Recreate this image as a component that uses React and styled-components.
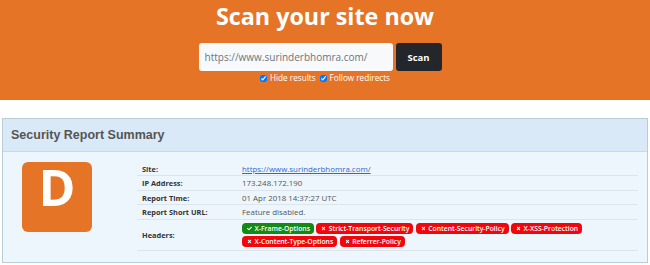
import styled, { createGlobalStyle } from "styled-components"
import { FaCheck, FaTimes } from "react-icons/fa"

const GlobalStyle = createGlobalStyle`
body {
  margin: 0;
  background: #fff;
  font-family: "Open Sans", "Liberation Sans", sans-serif;
}
`;

const Hero = styled.div`
background-color: #e67426;
height: 100px;
display: flex;
flex-direction: column;
align-items: center;
`;

const HeroTitle = styled.h1`
margin: 0;
font-size: 23.3px;
line-height: 32px;
font-weight: 700;
color: #fff;
`;

const Form = styled.div`
display: flex;
align-items: center;
gap: 3px;
margin: 11px 10px 0 0;
`;

const UrlInput = styled.input`
width: 194px;
height: 28px;
box-sizing: border-box;
border: none;
border-radius: 3px;
background: #f8f9fa;
padding: 0 6px;
font-family: "Open Sans", sans-serif;
font-size: 10px;
outline: none;
&::placeholder {
  color: #6c757d;
}
`;

const ScanButton = styled.button`
width: 46px;
height: 28px;
border: none;
border-radius: 3px;
background: #23272b;
color: #fff;
font-family: "Open Sans", sans-serif;
font-weight: 700;
font-size: 9.5px;
padding: 0;
`;

const Options = styled.div`
display: flex;
align-items: center;
margin: 1px 0 0 4px;
color: #fff;
font-size: 8.2px;
line-height: 12px;
`;

const Option = styled.label`
display: flex;
align-items: center;
margin-right: 4px;
`;

const Check = styled.input`
width: 7px;
height: 7px;
margin: 0 3px 0 0;
`;

const Card = styled.div`
margin: 18px 2px 0;
border: 1px solid #b9cdd6;
background: #eef6fd;
`;

const CardHeader = styled.div`
height: 32px;
background: #dae9f8;
border-bottom: 1px solid #c6d9e6;
display: flex;
align-items: center;
padding-left: 8px;
`;

const CardTitle = styled.h2`
margin: 0;
font-family: "Liberation Sans", Arial, sans-serif;
font-size: 12.5px;
font-weight: 700;
color: #555;
`;

const CardBody = styled.div`
display: flex;
padding: 10px 9px 11px 0;
`;

const GradeCol = styled.div`
width: 134px;
flex-shrink: 0;
padding-left: 19px;
box-sizing: border-box;
`;

const Grade = styled.div`
width: 70px;
height: 70px;
border-radius: 6px;
background: #e67426;
color: #fff;
font-size: 50px;
line-height: 50px;
font-weight: 700;
text-align: center;
`;

const Table = styled.table`
flex: 1;
border-collapse: collapse;
table-layout: fixed;
`;

const Row = styled.tr`
border-bottom: 1px solid #dde5ec;
`;

const Label = styled.th`
width: 90px;
text-align: left;
font-size: 7.4px;
font-weight: 700;
color: #333;
padding: 2px 5px 1.4px;
line-height: 10px;
vertical-align: middle;
`;

const Value = styled.td`
color: #555;
font-size: 7.9px;
padding: ${props => props.badges ? "3px 5px 2.6px" : "2px 5px 1.4px"};
line-height: 10px;
`;

const Link = styled.a`
color: #3366cc;
text-decoration: underline;
`;

const Badges = styled.div`
display: flex;
flex-wrap: wrap;
gap: 2.4px 2.4px;
`;

const Badge = styled.span`
display: inline-flex;
align-items: center;
gap: 2.5px;
height: 11px;
padding: 0 4px 0 5px;
border-radius: 4px;
background: ${props => props.ok ? "#138a13" : "#f0060b"};
color: #fff;
font-size: 6.8px;
font-weight: 600;
line-height: 11px;
svg {
  width: 5px;
  height: 5px;
}
`;

const headers = [
  { name: "X-Frame-Options", ok: true },
  { name: "Strict-Transport-Security" },
  { name: "Content-Security-Policy" },
  { name: "X-XSS-Protection" },
  { name: "X-Content-Type-Options" },
  { name: "Referrer-Policy" },
];

const App = () => {
  return (
    <>
      <GlobalStyle />
      <Hero>
        <HeroTitle>Scan your site now</HeroTitle>
        <Form>
          <UrlInput placeholder="https://www.surinderbhomra.com/" />
          <ScanButton>Scan</ScanButton>
        </Form>
        <Options>
          <Option><Check type="checkbox" checked readOnly />Hide results</Option>
          <Option><Check type="checkbox" checked readOnly />Follow redirects</Option>
        </Options>
      </Hero>
      <Card>
        <CardHeader>
          <CardTitle>Security Report Summary</CardTitle>
        </CardHeader>
        <CardBody>
          <GradeCol>
            <Grade>D</Grade>
          </GradeCol>
          <Table>
            <tbody>
              <Row>
                <Label>Site:</Label>
                <Value><Link href="#">https://www.surinderbhomra.com/</Link></Value>
              </Row>
              <Row>
                <Label>IP Address:</Label>
                <Value>173.248.172.190</Value>
              </Row>
              <Row>
                <Label>Report Time:</Label>
                <Value>01 Apr 2018 14:37:27 UTC</Value>
              </Row>
              <Row>
                <Label>Report Short URL:</Label>
                <Value>Feature disabled.</Value>
              </Row>
              <Row>
                <Label>Headers:</Label>
                <Value badges>
                  <Badges>
                    {headers.map(h => (
                      <Badge key={h.name} ok={h.ok}>
                        {h.ok ? <FaCheck /> : <FaTimes />}
                        {h.name}
                      </Badge>
                    ))}
                  </Badges>
                </Value>
              </Row>
            </tbody>
          </Table>
        </CardBody>
      </Card>
    </>
  )
}

export default App
